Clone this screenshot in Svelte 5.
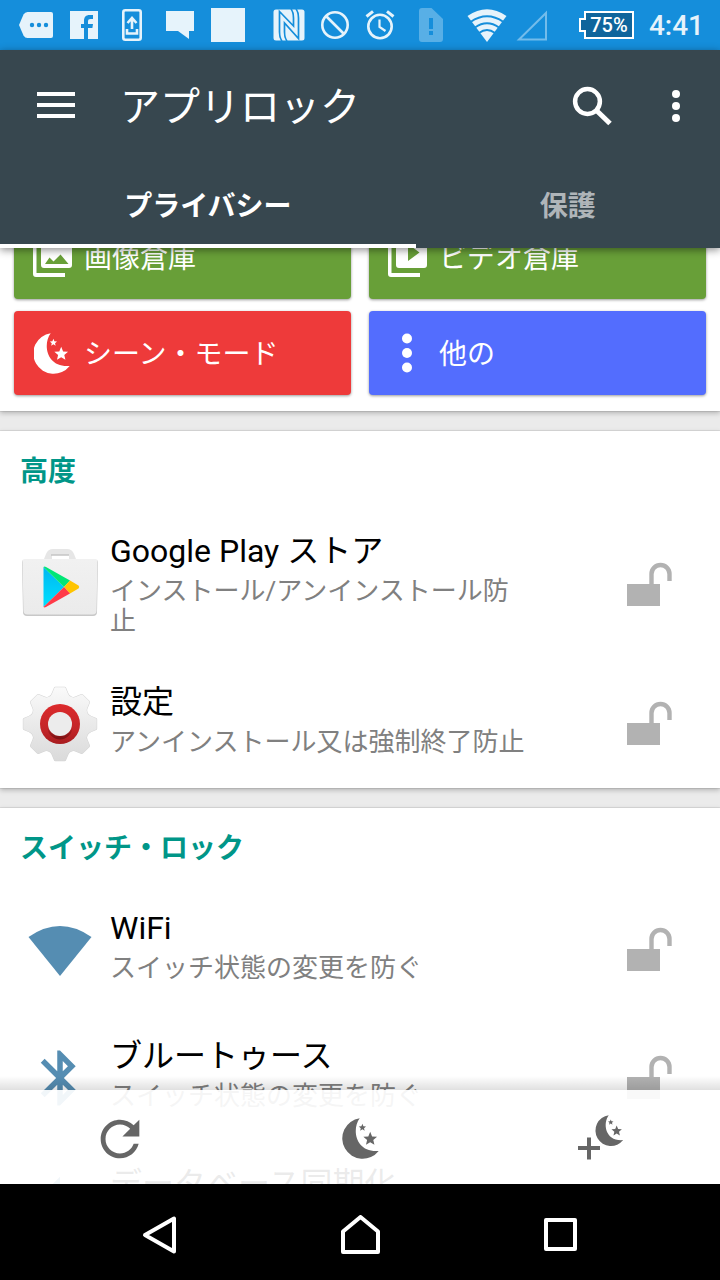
<script>
  const tools = ['画像倉庫', 'ビデオ倉庫', 'シーン・モード', '他の'].map((label, i) => ({
    label,
    kind: ['photo', 'video', 'moon', 'more'][i],
    tone: ['green', 'green', 'red', 'blue'][i]
  }));

  const sections = [
    {
      title: '高度',
      rows: [
        { name: 'Google Play ストア', note: 'インストール/アンインストール防止', icon: 'play' },
        { name: '設定', note: 'アンインストール又は強制終了防止', icon: 'gear' }
      ]
    },
    {
      title: 'スイッチ・ロック',
      rows: [
        { name: 'WiFi', note: 'スイッチ状態の変更を防ぐ', icon: 'wifi' },
        { name: 'ブルートゥース', note: 'スイッチ状態の変更を防ぐ', icon: 'bluetooth' },
        { name: 'データベース同期化', note: 'スイッチ状態の変更を防ぐ', icon: 'sync' }
      ]
    }
  ];

  let activeTab = $state(0);
  const tabs = ['プライバシー', '保護'];

  function star(cx, cy, r) {
    return Array.from({ length: 10 }, (_, i) => {
      const a = (Math.PI * i) / 5 - Math.PI / 2;
      const d = i % 2 ? r * 0.45 : r;
      return `${(cx + d * Math.cos(a)).toFixed(2)},${(cy + d * Math.sin(a)).toFixed(2)}`;
    }).join(' ');
  }

  // Eight-toothed gear outline around (40, 40)
  const gear = (() => {
    const at = (deg, r) => {
      const a = ((deg - 90) * Math.PI) / 180;
      return `${(40 + r * Math.cos(a)).toFixed(2)} ${(40 + r * Math.sin(a)).toFixed(2)}`;
    };
    let d = '';
    for (let i = 0; i < 8; i++) {
      const c = i * 45;
      d += `${i ? 'L' : 'M'}${at(c - 7.5, 36)}L${at(c + 7.5, 36)}L${at(c + 13, 31)}Q${at(c + 17, 28)} ${at(c + 22.5, 28.5)}Q${at(c + 28, 28)} ${at(c + 32, 31)}`;
    }
    return d + 'Z';
  })();
</script>

{#snippet moonShape()}
  <path d="M16.7.2C8.3 11.7 12.7 35 35.7 33A20.4 20.4 0 1 1 16.7.2Z" />
  <polygon points={star(19.4, 9.6, 3.8)} />
  <polygon points={star(27.2, 21, 7.2)} />
{/snippet}

<div class="screen">
  <div class="status">
    <div class="notices">
      <svg width="34" height="26" viewBox="0 0 34 26"><path d="M8.500 0H32a2 2 0 0 1 2 2v22a2 2 0 0 1-2 2H8.500Q6 26 4.500 23.500L0 13 4.500 2.500Q6 0 8.500 0z" fill="#e6f3fb"/><g fill="#158edb"><circle cx="13" cy="13" r="2.200"/><circle cx="20" cy="13" r="2.200"/><circle cx="27" cy="13" r="2.200"/></g></svg>
      <svg width="28" height="28" viewBox="0 0 28 28"><path d="M0 0h28v28H0z" fill="#e6f3fb"/><path d="M14 28V17h-3v-4h3v-3c0-4 2-6 5.500-6H23v4h-2.500c-1.800 0-2.500.8-2.500 2.500V13h5l-.6 4H18v11z" fill="#158edb"/></svg>
      <svg width="20" height="32" viewBox="0 0 20 32" fill="none" stroke="#e6f3fb"><rect x="1.300" y="1.300" width="17.400" height="29.400" rx="2" stroke-width="2.600"/><path d="M10 20V10M5.500 14L10 9l4.500 5M5 20v4.500h10V20" stroke-width="2.600"/></svg>
      <svg width="28" height="28" viewBox="0 0 28 28"><path d="M0 0h28v20h-5v8l-11-8H0z" fill="#e6f3fb"/></svg>
      <svg width="34" height="34" viewBox="0 0 34 34"><path d="M0 0h34v34H0z" fill="#e6f3fb"/></svg>
    </div>
    <div class="system">
      <svg width="32" height="32" viewBox="0 0 32 32"><rect x=".5" y=".5" width="31" height="31" rx="2.500" fill="#e6f3fb"/><g fill="none" stroke="#158edb" stroke-width="1.700"><path d="M9 32Q6.500 29 6.500 23V2.500L20.500 17V9q0-6-2.500-9"/><path d="M23 0q2.500 3 2.500 9v20.500L11.500 14v9q0 6 2.500 9"/></g></svg>
      <svg width="30" height="30" viewBox="0 0 30 30" fill="none" stroke="#e6f3fb" stroke-width="2.600"><circle cx="15" cy="15" r="12.700"/><path d="M6 6l18 18"/></svg>
      <svg width="30" height="30" viewBox="0 0 30 30" fill="none" stroke="#e6f3fb" stroke-width="2.600"><circle cx="15" cy="16.500" r="11.700"/><path d="M14.500 9.500V17l6 4" stroke-width="2.200"/><path d="M1.500 6.500L8 1.300M28.500 6.500L22 1.300" stroke-width="3"/></svg>
      <svg width="42" height="34" viewBox="0 0 42 34"><path d="M12 0h9.500L33 11v20a3 3 0 0 1-3 3H12a3 3 0 0 1-3-3V3a3 3 0 0 1 3-3z" fill="#58afe6"/><path d="M19 10h4v11h-4zm0 13h4v4h-4z" fill="#158edb"/></svg>
      <svg width="97" height="34" viewBox="0 0 97 34"><path d="M.5 8Q20-5.500 39.500 8L20 34z" fill="#e6f3fb"/><g fill="none" stroke="#158edb" stroke-width="2"><path d="M3.500 14Q20 2.500 36.500 14M8 19.500Q20 11 32 19.500M12 25Q20 19 28 25"/></g><path d="M52 31.500H79V5z" fill="none" stroke="#73bceb" stroke-width="2"/></svg>
      <span class="battery">75%</span>
      <time>4:41</time>
    </div>
  </div>

  <header>
    <div class="bar">
      <button class="menu" aria-label="メニュー">
        <svg width="38" height="28" viewBox="0 0 38 28" fill="#fff"><path d="M0 0h38v4H0zM0 11h38v4H0zM0 22h38v4H0z"/></svg>
      </button>
      <h1>アプリロック</h1>
      <button class="tool" aria-label="検索">
        <svg width="40" height="40" viewBox="0 0 40 40" fill="none" stroke="#fff"><circle cx="15.500" cy="15.500" r="12.400" stroke-width="4.500"/><path d="M24.500 24.500L38 37.500" stroke-width="5"/></svg>
      </button>
      <button class="tool" aria-label="その他">
        <svg width="8" height="32" viewBox="0 0 8 32" fill="#fff"><circle cx="4" cy="4" r="4"/><circle cx="4" cy="16" r="4"/><circle cx="4" cy="28" r="4"/></svg>
      </button>
    </div>
    <div class="tabs" role="tablist">
      {#each tabs as tab, i}
        <button role="tab" aria-selected={activeTab === i} onclick={() => (activeTab = i)}>{tab}</button>
      {/each}
    </div>
  </header>

  <div class="body">
    <main>
      <section class="card tools">
        {#each tools as tool}
          <button class={tool.tone}>
            <span class="glyph">
              {#if tool.kind === 'photo'}
                <svg width="40" height="40" viewBox="0 0 40 40" fill="#fff"><path fill-rule="evenodd" d="M12 0h25a3 3 0 0 1 3 3v25a3 3 0 0 1-3 3H12a3 3 0 0 1-3-3V3a3 3 0 0 1 3-3zm1 27h23.500l-8-9.500-7 7-4-4z"/><path d="M1 8h3.500v28H33v4H4a3 3 0 0 1-3-3z"/></svg>
              {:else if tool.kind === 'video'}
                <svg width="40" height="40" viewBox="0 0 40 40" fill="#fff"><path fill-rule="evenodd" d="M12 0h25a3 3 0 0 1 3 3v25a3 3 0 0 1-3 3H12a3 3 0 0 1-3-3V3a3 3 0 0 1 3-3zm9 7v17l11.500-8.500z"/><path d="M1 8h3.500v28H33v4H4a3 3 0 0 1-3-3z"/></svg>
              {:else if tool.kind === 'moon'}
                <svg width="36" height="41" viewBox="0 0 36 41" fill="#fff">{@render moonShape()}</svg>
              {:else}
                <svg width="10" height="40" viewBox="0 0 10 40" fill="#fff"><circle cx="5" cy="5.500" r="5"/><circle cx="5" cy="20" r="5"/><circle cx="5" cy="34.500" r="5"/></svg>
              {/if}
            </span>
            <span class="label">{tool.label}</span>
          </button>
        {/each}
      </section>

      {#each sections as section}
        <section class="card">
          <h2>{section.title}</h2>
          <ul>
            {#each section.rows as row}
              <li>
                <span class="app">
                  {#if row.icon === 'play'}
                    <svg width="80" height="80" viewBox="0 0 80 80">
                      <defs>
                        <linearGradient id="bag" x2="0" y2="1"><stop stop-color="#f1f1f1"/><stop offset="1" stop-color="#ebebeb"/></linearGradient>
                        <linearGradient id="cyan" x2="0" y2="1"><stop stop-color="#00b7f0"/><stop offset="1" stop-color="#00e0ff"/></linearGradient>
                      </defs>
                      <g transform="translate(0 -1)">
                        <path d="M4 16h72a2 2 0 0 1 2 2l-1 50a4 4 0 0 1-4 4H7a4 4 0 0 1-4-4L2 18a2 2 0 0 1 2-2z" fill="#c8c8c8"/>
                        <path fill-rule="evenodd" d="M24 15l2-5q2-5 7-5h14q5 0 7 5l2 5zm8-4v4h17v-4z" fill="#e6e6e6"/>
                        <path d="M31 11h18" stroke="#c4c4c4" stroke-width="1.500"/>
                        <path d="M4.500 15h71a2 2 0 0 1 2 2l-1 49.500a4 4 0 0 1-4 4h-65a4 4 0 0 1-4-4L2.500 17a2 2 0 0 1 2-2z" fill="url(#bag)"/>
                        <path d="M23.500 23v40L44 43z" fill="url(#cyan)"/>
                        <path d="M23.500 23q1-1 2.500 0l24 13.500L44 43z" fill="#00e676"/>
                        <path d="M50 36.500l8.500 5q1.500 1.500 0 3L50 49.500 44 43z" fill="#ffc400"/>
                        <path d="M44 43l6 6.500L26 63q-1.500.8-2.500 0z" fill="#ff3a48"/>
                      </g>
                    </svg>
                  {:else if row.icon === 'gear'}
                    <svg width="80" height="80" viewBox="0 0 80 80">
                      <defs>
                        <linearGradient id="metal" gradientUnits="userSpaceOnUse" x1="0" y1="3" x2="0" y2="77"><stop stop-color="#fafafa"/><stop offset="1" stop-color="#dadada"/></linearGradient>
                        <linearGradient id="ring" x2="0" y2="1"><stop stop-color="#dc2a2c"/><stop offset=".65" stop-color="#c22528"/><stop offset="1" stop-color="#a81c1f"/></linearGradient>
                        <linearGradient id="shade" x2="0" y2="1"><stop offset=".5" stop-color="#7a1012" stop-opacity="0"/><stop offset="1" stop-color="#7a1012"/></linearGradient>
                      </defs>
                      <path d={gear} fill="#d4d4d4" stroke="#d4d4d4" stroke-width="3" stroke-linejoin="round"/>
                      <path d={gear} fill="url(#metal)" stroke="url(#metal)" stroke-width="2" stroke-linejoin="round"/>
                      <circle cx="40" cy="40" r="20" fill="url(#ring)"/>
                      <circle cx="40" cy="43" r="12.500" fill="url(#shade)"/>
                      <circle cx="40" cy="40" r="12" fill="#ececec"/>
                    </svg>
                  {:else if row.icon === 'wifi'}
                    <svg width="80" height="80" viewBox="0 0 80 80"><path d="M8.500 27Q40 5 71.500 27L40 66z" fill="#558db2"/></svg>
                  {:else if row.icon === 'bluetooth'}
                    <svg width="66" height="66" viewBox="0 0 24 24"><path d="M17.710 7.710L12 2h-1v7.590L6.410 5 5 6.410 10.590 12 5 17.590 6.410 19 11 14.410V22h1l5.710-5.710-4.300-4.290zM13 5.830l1.880 1.880L13 9.590zm1.880 10.460L13 18.170v-3.760z" fill="#558db2"/></svg>
                  {:else}
                    <svg width="64" height="64" viewBox="0 0 24 24"><path d="M12 4V1L8 5l4 4V6c3.310 0 6 2.690 6 6 0 1.010-.25 1.970-.7 2.800l1.460 1.460C19.540 15.030 20 13.570 20 12c0-4.420-3.580-8-8-8zm0 14c-3.310 0-6-2.690-6-6 0-1.010.25-1.970.7-2.800L5.240 7.740C4.460 8.970 4 10.430 4 12c0 4.420 3.580 8 8 8v3l4-4-4-4z" fill="#558db2"/></svg>
                  {/if}
                </span>
                <div class="text">
                  <h3>{row.name}</h3>
                  <p>{row.note}</p>
                </div>
                <button class="lock" aria-label="{row.name} をロック">
                  <svg width="46" height="46" viewBox="0 0 46 46"><path d="M0 22h33v22H0z" fill="#b2b2b2"/><path d="M24.500 23V12a9 9 0 0 1 18 0v7" fill="none" stroke="#b2b2b2" stroke-width="4.400"/></svg>
                </button>
              </li>
            {/each}
          </ul>
        </section>
      {/each}
    </main>

    <div class="actions">
      <button aria-label="更新">
        <svg width="58" height="58" viewBox="0 0 24 24" fill="#666"><path d="M17.650 6.350C16.200 4.900 14.210 4 12 4c-4.420 0-7.990 3.580-7.990 8s3.570 8 7.990 8c3.730 0 6.840-2.550 7.730-6h-2.080c-.82 2.330-3.040 4-5.650 4-3.310 0-6-2.690-6-6s2.690-6 6-6c1.660 0 3.140.69 4.220 1.780L13 11h7V4z"/></svg>
      </button>
      <button aria-label="シーン・モード">
        <svg width="38" height="41" viewBox="-2 0 38 41" fill="#666">{@render moonShape()}</svg>
      </button>
      <button aria-label="シーンを追加">
        <svg width="48" height="48" viewBox="-2 0 48 48" fill="#666"><g transform="translate(18 0) scale(.76)">{@render moonShape()}</g><path d="M9 22.500h4V31h9v4h-9v9.500H9V35H0v-4h9z"/></svg>
      </button>
    </div>
  </div>

  <nav>
    <button aria-label="戻る"><svg width="40" height="40" viewBox="0 0 40 40"><path d="M34 3.500v33L5 20z"/></svg></button>
    <button aria-label="ホーム"><svg width="40" height="40" viewBox="0 0 40 40"><path d="M3 37V16.500L20.500 2 38 16.500V37z"/></svg></button>
    <button aria-label="履歴"><svg width="40" height="40" viewBox="0 0 40 40"><path d="M6 5h29v29H6z"/></svg></button>
  </nav>
</div>

<style>
  :global(body) {
    margin: 0;
  }
  .screen {
    display: flex;
    flex-direction: column;
    height: 100vh;
    overflow: hidden;
    background: #ebebeb;
    color: #000;
    font-family: Roboto, 'Noto Sans CJK JP', sans-serif;
  }
  svg {
    display: block;
    flex: none;
  }
  button {
    display: flex;
    align-items: center;
    justify-content: center;
    margin: 0;
    padding: 0;
    border: 0;
    background: none;
    color: inherit;
    font: inherit;
    cursor: pointer;
  }
  h1, h2, h3, p, ul {
    margin: 0;
    padding: 0;
    list-style: none;
  }

  .status {
    display: flex;
    flex: none;
    align-items: center;
    justify-content: space-between;
    height: 50px;
    padding: 0 16px 0 12px;
    background: #158edb;
  }
  .notices {
    display: grid;
    grid-template-columns: repeat(5, 48px);
    align-items: center;
    justify-items: center;
  }
  .system {
    display: flex;
    align-items: center;
    gap: 15px;
  }
  .battery {
    position: relative;
    display: flex;
    align-items: center;
    justify-content: center;
    box-sizing: border-box;
    width: 50px;
    height: 28px;
    margin-left: 5px;
    border: 2px solid #fff;
    background: #0f659c;
    color: #fff;
    font-size: 20px;
    font-weight: 500;
    line-height: 24px;
  }
  .battery::before {
    content: '';
    position: absolute;
    left: -7px;
    top: 5px;
    width: 5px;
    height: 10px;
    border: 2px solid #fff;
    border-right: 0;
    background: #0f659c;
  }
  time {
    padding-top: 2px;
    color: #e6f3fb;
    font-size: 28px;
    font-weight: 500;
    line-height: 32px;
  }

  header {
    position: relative;
    z-index: 1;
    flex: none;
    background: #37474f;
    color: #fff;
    box-shadow: 0 2px 8px rgba(0, 0, 0, 0.45);
  }
  .bar {
    display: flex;
    align-items: center;
    height: 112px;
    padding-right: 2px;
  }
  .menu {
    width: 112px;
    height: 84px;
  }
  .tool {
    width: 84px;
    height: 84px;
  }
  h1 {
    flex: 1;
    padding: 4px 0 0 8px;
    font-size: 40px;
    font-weight: 400;
    line-height: 56px;
  }
  .tabs {
    display: flex;
  }
  .tabs button {
    flex: 1 1 auto;
    height: 86px;
    box-sizing: border-box;
    border-top: 2px solid transparent;
    border-bottom: 4px solid transparent;
    font-size: 28px;
    font-weight: 700;
    color: #afb5b9;
  }
  .tabs button[aria-selected='true'] {
    border-bottom-color: #fff;
    color: #fff;
  }

  .body {
    position: relative;
    flex: 1;
    min-height: 0;
  }
  main {
    display: flex;
    flex-direction: column;
    gap: 20px;
    height: 100%;
    overflow: hidden;
  }
  .card {
    flex: none;
    background: #fff;
    box-shadow: 0 0 1px rgba(0, 0, 0, 0.4), 0 2px 5px rgba(0, 0, 0, 0.25);
  }
  .tools {
    display: grid;
    grid-template-columns: 1fr 1fr;
    gap: 12px 18px;
    margin-top: -33px;
    padding: 0 14px 16px;
  }
  .tools button {
    justify-content: flex-start;
    gap: 12px;
    height: 84px;
    padding: 0 18px;
    border-radius: 4px;
    box-shadow: 0 1px 3px rgba(0, 0, 0, 0.4);
    color: #fff;
    font-size: 28px;
  }
  .glyph {
    display: flex;
    justify-content: center;
    width: 40px;
  }
  .label {
    padding-bottom: 3px;
  }
  .green {
    background: #689f38;
  }
  .red {
    background: #ee3a3a;
  }
  .blue {
    background: #536dfe;
  }

  h2 {
    padding: 21px 20px 17px;
    color: #009688;
    font-size: 28px;
    font-weight: 700;
    line-height: 40px;
  }
  li {
    display: flex;
    align-items: center;
    box-sizing: border-box;
    min-height: 128px;
    padding: 0 20px;
  }
  .app {
    display: flex;
    justify-content: center;
    width: 80px;
  }
  .text {
    flex: 1;
    align-self: flex-start;
    padding: 17px 70px 24px 10px;
  }
  h3 {
    font-size: 32px;
    font-weight: 400;
    line-height: 50px;
  }
  p {
    color: #808080;
    font-size: 26px;
    line-height: 30px;
  }
  .lock {
    width: 100px;
    height: 80px;
  }

  .actions {
    position: absolute;
    inset: auto 0 0;
    display: grid;
    grid-template-columns: repeat(3, 1fr);
    box-sizing: border-box;
    height: 94px;
    padding-top: 3px;
    background: rgba(255, 255, 255, 0.92);
  }
  .actions::before {
    content: '';
    position: absolute;
    inset: -14px 0 100%;
    background: linear-gradient(transparent, rgba(0, 0, 0, 0.12));
  }

  nav {
    display: grid;
    flex: none;
    grid-template-columns: repeat(3, 1fr);
    height: 96px;
    padding: 6px 60px 0;
    box-sizing: border-box;
    background: #000;
  }
  nav svg {
    fill: none;
    stroke: #fff;
    stroke-width: 4;
    stroke-linejoin: round;
  }
</style>
